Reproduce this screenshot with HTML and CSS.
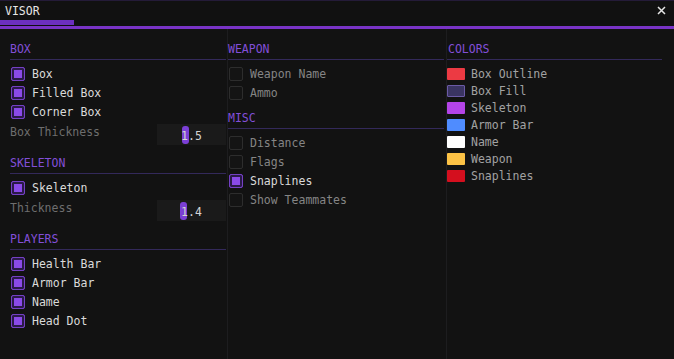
FILE: index.html
```html
<!DOCTYPE html>
<html lang="en">
<head>
    <meta charset="UTF-8">
    <meta name="viewport" content="width=device-width, initial-scale=1.0">
    <title>VISOR</title>
    <link rel="stylesheet" href="styles.css">
</head>
<body>
    <div class="window">
        <div class="titlebar">
            <span class="title">VISOR</span>
            <svg class="close" width="9" height="9" viewBox="0 0 9 9">
                <path d="M1 1 L8 8 M8 1 L1 8" stroke="#e6e6e6" stroke-width="1.5" fill="none"/>
            </svg>
        </div>
        <div class="tabstrip"><div class="tab"></div></div>
        <div class="accent"></div>

        <div class="columns">
            <div class="column col-left">
                <div class="section">
                    <div class="section-head">BOX</div>
                    <div class="check on"><span class="box"></span>Box</div>
                    <div class="check on"><span class="box"></span>Filled Box</div>
                    <div class="check on"><span class="box"></span>Corner Box</div>
                    <div class="slider-row">
                        <span class="slider-label">Box Thickness</span>
                        <div class="slider">
                            <span class="grab" style="left: 25px"></span>
                            <span class="value">1.5</span>
                        </div>
                    </div>
                </div>
                <div class="section">
                    <div class="section-head">SKELETON</div>
                    <div class="check on"><span class="box"></span>Skeleton</div>
                    <div class="slider-row">
                        <span class="slider-label">Thickness</span>
                        <div class="slider">
                            <span class="grab" style="left: 23px"></span>
                            <span class="value">1.4</span>
                        </div>
                    </div>
                </div>
                <div class="section">
                    <div class="section-head">PLAYERS</div>
                    <div class="check on"><span class="box"></span>Health Bar</div>
                    <div class="check on"><span class="box"></span>Armor Bar</div>
                    <div class="check on"><span class="box"></span>Name</div>
                    <div class="check on"><span class="box"></span>Head Dot</div>
                </div>
            </div>

            <div class="column col-mid">
                <div class="section">
                    <div class="section-head">WEAPON</div>
                    <div class="check"><span class="box"></span>Weapon Name</div>
                    <div class="check"><span class="box"></span>Ammo</div>
                </div>
                <div class="section">
                    <div class="section-head">MISC</div>
                    <div class="check"><span class="box"></span>Distance</div>
                    <div class="check"><span class="box"></span>Flags</div>
                    <div class="check on"><span class="box"></span>Snaplines</div>
                    <div class="check"><span class="box"></span>Show Teammates</div>
                </div>
            </div>

            <div class="column col-right">
                <div class="section">
                    <div class="section-head">COLORS</div>
                    <div class="color"><span class="swatch" style="background: #ec3a43"></span>Box Outline</div>
                    <div class="color"><span class="swatch swatch-fill" style="background: #3a3462"></span>Box Fill</div>
                    <div class="color"><span class="swatch" style="background: #b444e8"></span>Skeleton</div>
                    <div class="color"><span class="swatch" style="background: #4f8cff"></span>Armor Bar</div>
                    <div class="color"><span class="swatch" style="background: #ffffff"></span>Name</div>
                    <div class="color"><span class="swatch" style="background: #fcc245"></span>Weapon</div>
                    <div class="color"><span class="swatch" style="background: #d40f1e"></span>Snaplines</div>
                </div>
            </div>
        </div>
    </div>
</body>
</html>
```

FILE: styles.css
```css
* {
    box-sizing: border-box;
}
body {
    margin: 0;
    background: #121212;
    font-family: "DejaVu Sans Mono", "Liberation Mono", monospace;
    font-size: 11.5px;
    color: #dcdcdc;
}
.window {
    height: 359px;
    display: flex;
    flex-direction: column;
    background: #121212;
    overflow: hidden;
}
.titlebar {
    height: 20px;
    display: flex;
    justify-content: space-between;
    align-items: center;
    padding: 0 8px 0 5px;
    background: #111111;
    border-top: 1px solid #241b38;
}
.title {
    color: #e6e6e6;
    line-height: 14px;
}
.close {
    display: block;
}
.tabstrip {
    height: 6px;
    background: #0f0f10;
}
.tab {
    width: 74px;
    height: 5px;
    background: #6c2fc0;
}
.accent {
    height: 3px;
    background: #7833c6;
}
.columns {
    flex: 1;
    display: grid;
    grid-template-columns: 227px 219px 1fr;
}
.column {
    padding-top: 12px;
}
.col-left {
    padding-left: 10px;
    padding-right: 1px;
}
.col-mid {
    border-left: 1px solid #1d1d1f;
    padding-right: 2px;
}
.col-right {
    border-left: 1px solid #1d1d1f;
    padding-right: 12px;
}
.section + .section {
    margin-top: 8px;
}
.section-head {
    line-height: 14px;
    padding-top: 1px;
    padding-bottom: 3px;
    border-bottom: 1px solid #33295a;
    margin-bottom: 4px;
    color: #824fd8;
}
.check {
    height: 19px;
    display: flex;
    align-items: center;
    gap: 7px;
    padding-left: 1px;
    color: #858585;
}
.box {
    width: 14px;
    height: 14px;
    border: 1px solid #2d2d2d;
    border-radius: 2px;
    background: #141414;
}
.check.on {
    color: #dadada;
}
.check.on .box {
    border: 1px solid #7440c4;
    background: #8a4ae8;
    box-shadow: inset 0 0 0 2px #2a1a48;
}
.slider-row {
    display: flex;
    justify-content: space-between;
    margin: 3px 0 10px;
    height: 21px;
}
.slider-label {
    color: #6e6e6e;
    line-height: 14px;
    padding-top: 1px;
}
.slider {
    position: relative;
    width: 69px;
    height: 21px;
    background: #1a1a1a;
    display: flex;
    align-items: center;
    justify-content: center;
}
.grab {
    position: absolute;
    top: 2px;
    width: 7px;
    height: 18px;
    border-radius: 3px;
    background: #7b3fd6;
}
.value {
    position: relative;
    color: #d4d4d4;
    padding-top: 2px;
}
.color {
    height: 17px;
    display: flex;
    align-items: center;
    gap: 6px;
    color: #a2a2a2;
}
.col-right .section-head {
    padding-left: 1px;
    margin-bottom: 5px;
}
.swatch {
    width: 18px;
    height: 12px;
    border-radius: 1px;
}
.swatch-fill {
    border: 1px solid #6b5aa6;
}
```
